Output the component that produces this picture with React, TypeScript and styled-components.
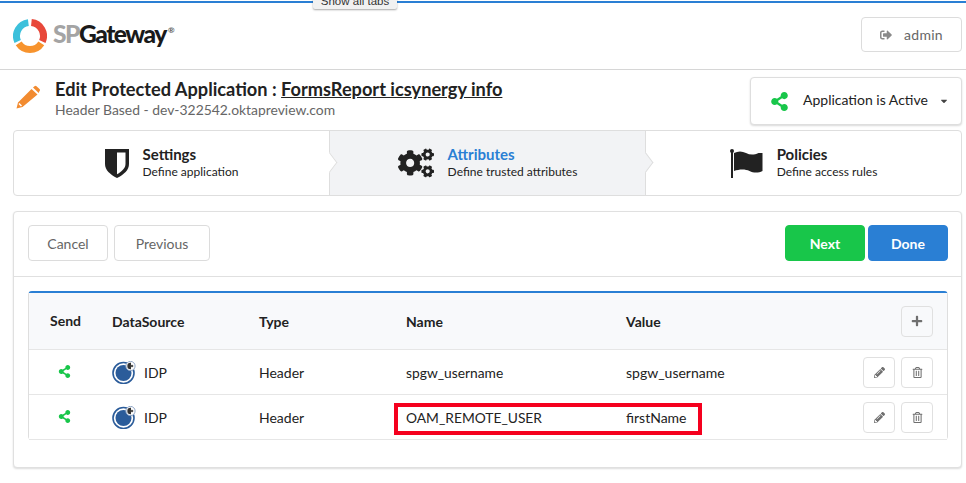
import React from 'react'
import styled, { createGlobalStyle } from 'styled-components'
import {
  FaCaretDown,
  FaCogs,
  FaPencilAlt,
  FaPlus,
  FaRegTrashAlt,
  FaShareAlt,
  FaSignOutAlt,
} from 'react-icons/fa'

const GlobalStyle = createGlobalStyle`
  html, body {
    margin: 0;
    padding: 0;
    background: #fff;
    overflow: hidden;
  }
  body {
    font-family: Lato, "Liberation Sans", sans-serif;
    color: #222;
    -webkit-font-smoothing: antialiased;
  }
`

const Page = styled.div`
  position: relative;
  width: 966px;
  height: 483px;
  padding-top: 1px;
  overflow: hidden;
  box-sizing: border-box;
`

const TabsTip = styled.div`
  position: absolute;
  top: -6px;
  left: 313px;
  width: 84px;
  height: 15px;
  background: #f1f1f1;
  border-radius: 2px;
  box-shadow: 0 1px 2px rgba(0, 0, 0, 0.35);
  font-family: 'Liberation Sans', sans-serif;
  font-size: 11.5px;
  line-height: 15px;
  text-align: center;
  color: #333;
`

const Header = styled.header`
  display: flex;
  align-items: center;
  justify-content: space-between;
  box-sizing: border-box;
  height: 69px;
  padding: 0 4px 0 13px;
  border-top: 2px solid #2a7fd4;
  border-bottom: 1px solid #d6d6d6;
`

const Brand = styled.div`
  display: flex;
  align-items: center;
  gap: 6px;
  margin-top: -1px;
`

const BrandName = styled.span`
  margin-top: -3px;
  font-size: 24.6px;
  font-weight: 900;
  letter-spacing: -1.5px;
  line-height: 34px;
  color: #1a1a1a;
`

const BrandGrey = styled.span`
  color: #a4a4a4;
`

const BrandMark = styled.sup`
  font-size: 8px;
  font-weight: 700;
  letter-spacing: 0;
  color: #555;
  vertical-align: 10px;
  line-height: 0;
  margin-left: 2px;
`

const AdminButton = styled.button`
  display: flex;
  align-items: center;
  justify-content: center;
  gap: 12px;
  box-sizing: border-box;
  width: 101px;
  height: 35px;
  margin-top: -3px;
  background: #fff;
  border: 1px solid #dcdcdc;
  border-radius: 4px;
  font-family: inherit;
  font-size: 14px;
  letter-spacing: 0.3px;
  color: #666;

  svg {
    color: #8a8a8a;
    font-size: 12px;
  }
`

const TitleRow = styled.section`
  display: flex;
  align-items: flex-start;
  justify-content: space-between;
  height: 60px;
  padding: 0 4px 0 16px;
`

const TitleGroup = styled.div`
  display: flex;
  align-items: flex-start;
  gap: 15px;
  padding-top: 8px;

  > svg {
    margin-top: 7px;
  }
`

const TitleText = styled.h1`
  margin: 0;
  font-size: 18.2px;
  font-weight: 700;
  line-height: 22px;
  color: #222;

  a {
    color: inherit;
    text-decoration: underline;
  }
`

const SubTitle = styled.div`
  font-size: 13.9px;
  line-height: 19px;
  color: #666;
`

const StatusButton = styled.button`
  display: flex;
  align-items: center;
  box-sizing: border-box;
  width: 212px;
  height: 48px;
  margin-top: 7px;
  padding: 0 0 0 19px;
  background: #fff;
  border: 1px solid #dedede;
  border-radius: 4px;
  box-shadow: 0 1px 2px rgba(0, 0, 0, 0.15);
  font-family: inherit;
  font-size: 14px;
  color: #222;
`

const StatusLabel = styled.span`
  margin: -3px 11px 0 14px;
`

const Steps = styled.nav`
  display: grid;
  grid-template-columns: 316px 316px 1fr;
  box-sizing: border-box;
  width: 949px;
  height: 66px;
  margin-left: 13px;
  border: 1px solid #dedede;
  border-radius: 4px;
  background: #fff;
`

const Step = styled.div<{ $active?: boolean; $last?: boolean }>`
  position: relative;
  display: flex;
  align-items: center;
  justify-content: center;
  gap: 14px;
  background: ${({ $active }) => ($active ? '#f2f3f5' : 'transparent')};
  border-right: ${({ $last }) => ($last ? 'none' : '1px solid #dedede')};

  ${({ $last, $active }) =>
    $last
      ? ''
      : `&::after {
    content: '';
    position: absolute;
    z-index: 1;
    top: 25px;
    right: -7px;
    width: 13px;
    height: 13px;
    box-sizing: border-box;
    background: ${$active ? '#f2f3f5' : '#fff'};
    border-top: 1px solid #dedede;
    border-right: 1px solid #dedede;
    transform: rotate(45deg) skew(8deg, 8deg);
  }`}
`

const StepTitle = styled.div<{ $active?: boolean }>`
  font-size: 15px;
  font-weight: 700;
  line-height: 18px;
  color: ${({ $active }) => ($active ? '#2a7fd4' : '#222')};
`

const StepHint = styled.div`
  font-size: 12px;
  line-height: 18px;
  color: #222;
`

const Card = styled.main`
  box-sizing: border-box;
  width: 949px;
  height: 257px;
  margin: 15px 0 0 13px;
  border: 1px solid #e0e0e0;
  border-radius: 4px;
  box-shadow: 0 1px 2px rgba(0, 0, 0, 0.14);
  background: #fff;
`

const Toolbar = styled.div`
  display: flex;
  align-items: center;
  justify-content: space-between;
  box-sizing: border-box;
  height: 65px;
  padding: 0 13px 2px 14px;
  border-bottom: 1px solid #e0e0e0;
`

const ButtonGroup = styled.div<{ $gap: number }>`
  display: flex;
  gap: ${({ $gap }) => $gap}px;
`

const ActionButton = styled.button<{ $fill?: string; $width: number }>`
  box-sizing: border-box;
  width: ${({ $width }) => $width}px;
  height: 36px;
  background: ${({ $fill }) => $fill ?? '#fff'};
  border: 1px solid ${({ $fill }) => $fill ?? '#dcdcdc'};
  border-radius: 4px;
  font-family: inherit;
  font-size: 14px;
  font-weight: ${({ $fill }) => ($fill ? 700 : 400)};
  color: ${({ $fill }) => ($fill ? '#fff' : '#666')};
`

const Table = styled.div`
  position: relative;
  box-sizing: border-box;
  margin: 14px 13px 0 14px;
  height: 149px;
  border: 1px solid #dedede;
  border-top: 2px solid #2a7fd4;
  border-radius: 4px;
`

const Row = styled.div<{ $head?: boolean }>`
  display: grid;
  grid-template-columns: 83px 147px 147px 220px 1fr auto;
  align-items: center;
  box-sizing: border-box;
  height: ${({ $head }) => ($head ? '57px' : '45px')};
  font-size: 14px;
  font-weight: ${({ $head }) => ($head ? 700 : 400)};
  background: ${({ $head }) => ($head ? '#f8f9fb' : '#fff')};
  color: #222;
  border-bottom: 1px solid #e6e6e6;

  &:last-of-type {
    border-bottom: none;
    height: 44px;
    border-radius: 0 0 4px 4px;
  }
`

const SendCell = styled.div<{ $head?: boolean }>`
  padding-left: ${({ $head }) => ($head ? '21px' : '29px')};
  color: ${({ $head }) => ($head ? '#222' : '#18c64a')};
  font-size: ${({ $head }) => ($head ? '14px' : '13px')};
  line-height: 1;
`

const SourceCell = styled.div`
  display: flex;
  align-items: center;
  gap: 8px;
`

const NameCell = styled.div`
  font-size: 13.8px;
`

const Tools = styled.div`
  display: flex;
  justify-content: flex-end;
  gap: 6px;
  padding-right: 14px;
`

const IconButton = styled.button<{ $head?: boolean }>`
  display: flex;
  align-items: center;
  justify-content: center;
  box-sizing: border-box;
  width: 32px;
  height: 31px;
  padding: 0;
  background: ${({ $head }) => ($head ? '#f8f9fb' : '#fff')};
  border: 1px solid #e0e0e0;
  border-radius: 4px;
  color: #6f6f6f;
  font-size: ${({ $head }) => ($head ? '12px' : '11px')};
`

const Highlight = styled.div`
  position: absolute;
  left: 365px;
  top: 110px;
  width: 308px;
  height: 32px;
  box-sizing: border-box;
  border: 4px solid #f5001e;
  pointer-events: none;
`

const Logo: React.FC = () => {
  // three equal ring segments with small gaps
  const arc = (from: number, to: number) => {
    const r = 13.5
    const pt = (a: number) => [
      17 + r * Math.cos((a * Math.PI) / 180),
      17 - r * Math.sin((a * Math.PI) / 180),
    ]
    const [x1, y1] = pt(from)
    const [x2, y2] = pt(to)
    return `M${x1} ${y1}A${r} ${r} 0 0 1 ${x2} ${y2}`
  }
  return (
    <svg width="34" height="34" viewBox="0 0 34 34" fill="none" strokeWidth="7">
      <path d={arc(204, 97)} stroke="#3cc0db" />
      <path d={arc(84, -24)} stroke="#e8483a" />
      <path d={arc(-33, -147)} stroke="#f7932d" />
    </svg>
  )
}

const EditIcon: React.FC = () => (
  <svg width="24" height="24" viewBox="0 0 24 24">
    <path
      d="M6.5 22 .5 23.5 2 17.5 15.5 4l6 5.5zM17 2.500 18.500 1.200a1.500 1.500 0 0 1 2 0l3 2.800a1.500 1.500 0 0 1 0 2.100L22.700 8z"
      fill="#f28b30"
    />
    <path d="M3 18.500 5.500 21" stroke="#fff" strokeWidth="1.500" />
  </svg>
)

const ShieldIcon: React.FC = () => (
  <svg width="24" height="29" viewBox="0 0 24 29">
    <path d="M0 0h24v15c0 6-5 10.500-12 14C5 25.500 0 21 0 15z" fill="#222" />
    <path d="M12 3.500h8.500V15c0 4-3.500 7.500-8.500 10.300z" fill="#fff" />
  </svg>
)

const FlagIcon: React.FC = () => (
  <svg width="33" height="29" viewBox="0 0 33 29">
    <circle cx="2" cy="2" r="2" fill="#222" />
    <rect x="1" y="2" width="2" height="27" fill="#222" />
    <path
      d="M4 4c4-2 8-2 12 0s8 2 12.500 0H32.500v18c-4 2-9 2-13 0s-10-2-15.500 0z"
      fill="#222"
    />
  </svg>
)

const IdpIcon: React.FC = () => (
  <svg width="24" height="23" viewBox="0 0 24 23">
    <circle cx="11.500" cy="12" r="10.500" fill="#fff" stroke="#2b5c9a" strokeWidth="1.600" />
    <circle cx="11.500" cy="12" r="8" fill="#2b5c9a" />
    <circle cx="18.500" cy="5" r="4.600" fill="#fff" stroke="#8fa6c6" strokeWidth="1" />
    <path d="M18.500 1.800a3.200 3.200 0 0 0 0 6.400z" fill="#333" />
    <path d="M18.500 1.800v6.400" stroke="#333" strokeWidth="1" />
    <circle cx="20" cy="5" r="1.300" fill="#555" />
  </svg>
)

type Attribute = { name: string; value: string }

const attributes: Attribute[] = [
  { name: 'spgw_username', value: 'spgw_username' },
  { name: 'OAM_REMOTE_USER', value: 'firstName' },
]

export default function App() {
  return (
    <>
      <GlobalStyle />
      <Page>
        <Header>
          <Brand>
            <Logo />
            <BrandName>
              <BrandGrey>SP</BrandGrey>Gateway<BrandMark>®</BrandMark>
            </BrandName>
          </Brand>
          <AdminButton type="button">
            <FaSignOutAlt />
            admin
          </AdminButton>
        </Header>
        <TabsTip>Show all tabs</TabsTip>

        <TitleRow>
          <TitleGroup>
            <EditIcon />
            <div>
              <TitleText>
                Edit Protected Application : <a href="#app">FormsReport icsynergy info</a>
              </TitleText>
              <SubTitle>Header Based - dev-322542.oktapreview.com</SubTitle>
            </div>
          </TitleGroup>
          <StatusButton type="button">
            <FaShareAlt color="#18c64a" size={19} />
            <StatusLabel>Application is Active</StatusLabel>
            <FaCaretDown color="#444" size={10} />
          </StatusButton>
        </TitleRow>

        <Steps>
          <Step>
            <ShieldIcon />
            <div>
              <StepTitle>Settings</StepTitle>
              <StepHint>Define application</StepHint>
            </div>
          </Step>
          <Step $active>
            <FaCogs size={36} color="#222" />
            <div>
              <StepTitle $active>Attributes</StepTitle>
              <StepHint>Define trusted attributes</StepHint>
            </div>
          </Step>
          <Step $last>
            <FlagIcon />
            <div>
              <StepTitle>Policies</StepTitle>
              <StepHint>Define access rules</StepHint>
            </div>
          </Step>
        </Steps>

        <Card>
          <Toolbar>
            <ButtonGroup $gap={6}>
              <ActionButton type="button" $width={80}>
                Cancel
              </ActionButton>
              <ActionButton type="button" $width={96}>
                Previous
              </ActionButton>
            </ButtonGroup>
            <ButtonGroup $gap={3}>
              <ActionButton type="button" $width={80} $fill="#18c64a">
                Next
              </ActionButton>
              <ActionButton type="button" $width={80} $fill="#2a7fd4">
                Done
              </ActionButton>
            </ButtonGroup>
          </Toolbar>

          <Table>
            <Row $head>
              <SendCell $head>Send</SendCell>
              <div>DataSource</div>
              <div>Type</div>
              <div>Name</div>
              <div>Value</div>
              <Tools>
                <IconButton type="button" $head aria-label="Add">
                  <FaPlus />
                </IconButton>
              </Tools>
            </Row>
            {attributes.map((attr) => (
              <Row key={attr.name}>
                <SendCell>
                  <FaShareAlt />
                </SendCell>
                <SourceCell>
                  <IdpIcon />
                  IDP
                </SourceCell>
                <div>Header</div>
                <NameCell>{attr.name}</NameCell>
                <div>{attr.value}</div>
                <Tools>
                  <IconButton type="button" aria-label="Edit">
                    <FaPencilAlt />
                  </IconButton>
                  <IconButton type="button" aria-label="Delete">
                    <FaRegTrashAlt />
                  </IconButton>
                </Tools>
              </Row>
            ))}
            <Highlight />
          </Table>
        </Card>
      </Page>
    </>
  )
}
